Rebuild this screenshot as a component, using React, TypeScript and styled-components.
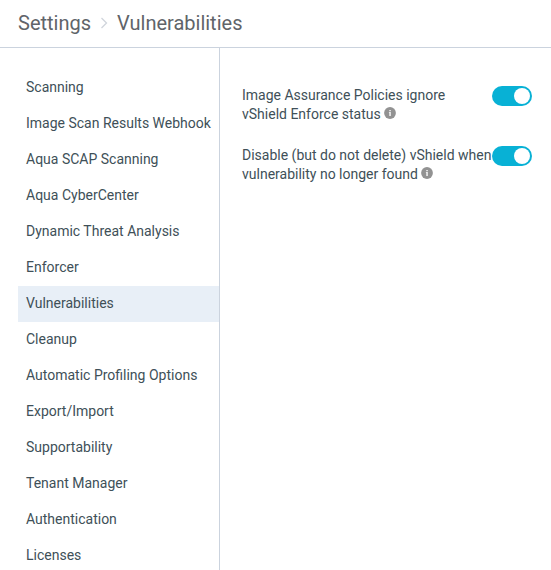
import React from "react";
import styled, { createGlobalStyle } from "styled-components";

const GlobalStyle = createGlobalStyle`
  *, *::before, *::after { box-sizing: border-box; }
  body { margin: 0; background: #fff; overflow: hidden; font-family: Roboto, sans-serif; }
`;

const Page = styled.div`
  width: 551px;
  height: 570px;
  overflow: hidden;
  display: flex;
  flex-direction: column;
  color: #405058;
  font-size: 14px;
`;

const Header = styled.header`
  height: 48px;
  flex: none;
  display: flex;
  align-items: center;
  padding: 0 18px 2px;
  border-bottom: 1px solid #cbd3de;
`;

const Crumb = styled.span`
  font-size: 20px;
  line-height: 24px;
  color: #606469;
`;

const Separator = styled.svg`
  width: 8px;
  height: 12px;
  margin: 0 9px;
`;

const Body = styled.main`
  flex: 1;
  min-height: 0;
  display: flex;
`;

const Sidebar = styled.nav`
  width: 220px;
  flex: none;
  padding: 22px 0 0 18px;
  border-right: 1px solid #cbd3de;
  overflow: hidden;
`;

const NavItem = styled.a<{ $active?: boolean }>`
  display: block;
  height: 36px;
  padding-left: 8px;
  line-height: 35px;
  white-space: nowrap;
  background: ${(p) => (p.$active ? "#e8eff7" : "transparent")};
`;

const Content = styled.section`
  flex: 1;
  padding: 38px 19px 0 22px;
`;

const SettingRow = styled.div`
  display: flex;
  justify-content: space-between;
  height: 60px;
`;

const Label = styled.div`
  line-height: 19px;
  white-space: nowrap;
`;

const InfoIcon = styled.svg`
  width: 12px;
  height: 12px;
  margin-left: 3px;
  vertical-align: 0;
`;

const Toggle = styled.button`
  width: 40px;
  height: 20px;
  flex: none;
  display: flex;
  justify-content: flex-end;
  align-items: center;
  padding: 2px;
  border: 0;
  border-radius: 10px;
  background: #08b1d5;
`;

const Knob = styled.span`
  width: 16px;
  height: 16px;
  border-radius: 50%;
  background: #fff;
`;

const sections = [
  "Scanning",
  "Image Scan Results Webhook",
  "Aqua SCAP Scanning",
  "Aqua CyberCenter",
  "Dynamic Threat Analysis",
  "Enforcer",
  "Vulnerabilities",
  "Cleanup",
  "Automatic Profiling Options",
  "Export/Import",
  "Supportability",
  "Tenant Manager",
  "Authentication",
  "Licenses",
];

const settings = [
  ["Image Assurance Policies ignore", "vShield Enforce status"],
  ["Disable (but do not delete) vShield when", "vulnerability no longer found"],
];

const Info = () => (
  <InfoIcon viewBox="0 0 12 12">
    <circle cx="6" cy="6" r="5.900" fill="#929292" />
    <path d="M5.300 2.900h1.500v1.300H5.300zM4.900 5.100h1.900v3.900H5.300V5.700h-.4z" fill="#f4f4f4" />
  </InfoIcon>
);

export default function App() {
  return (
    <Page>
      <GlobalStyle />
      <Header>
        <Crumb>Settings</Crumb>
        <Separator viewBox="0 0 8 12">
          <path d="M1.500 1l5 5-5 5" fill="none" stroke="#d0d5dc" strokeWidth="1.300" />
        </Separator>
        <Crumb>Vulnerabilities</Crumb>
      </Header>
      <Body>
        <Sidebar>
          {sections.map((name) => (
            <NavItem key={name} $active={name === "Vulnerabilities"}>
              {name}
            </NavItem>
          ))}
        </Sidebar>
        <Content>
          {settings.map(([first, second]) => (
            <SettingRow key={first}>
              <Label>
                {first}
                <br />
                {second}
                <Info />
              </Label>
              <Toggle role="switch" aria-checked="true" aria-label={first}>
                <Knob />
              </Toggle>
            </SettingRow>
          ))}
        </Content>
      </Body>
    </Page>
  );
}
